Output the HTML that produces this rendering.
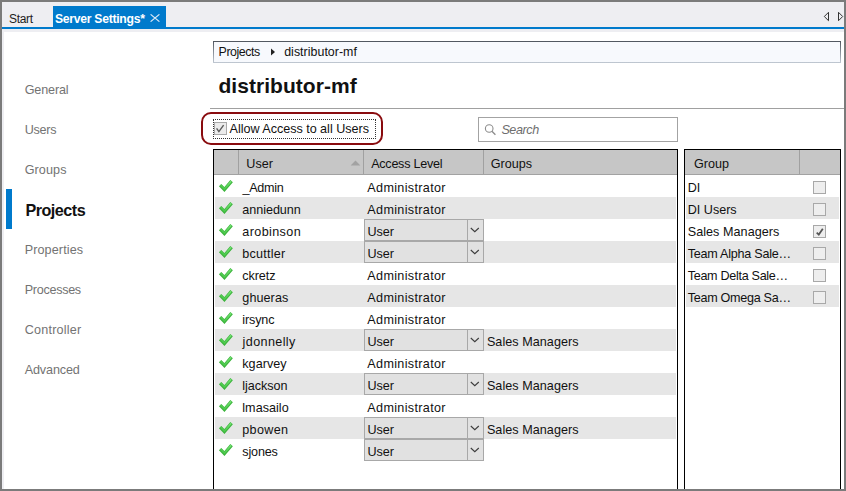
<!DOCTYPE html>
<html><head><meta charset="utf-8"><style>
html,body{margin:0;padding:0;width:846px;height:491px;overflow:hidden;background:#fff}
body{position:relative;font-family:"Liberation Sans",sans-serif}
body>div,body>svg{position:absolute}
.t{white-space:nowrap}
</style></head><body>
<div style="left:0px;top:0px;width:846px;height:491px;background:#7b7b7b;"></div>
<div style="left:2px;top:2px;width:842px;height:487px;background:#ffffff;"></div>
<div style="left:2px;top:2px;width:842px;height:25px;background:#eeeef2;"></div>
<div style="left:2px;top:27px;width:842px;height:2px;background:#007acc;"></div>
<div style="left:2px;top:29px;width:842px;height:3px;background:#eeeef2;"></div>
<div style="left:2px;top:29px;width:2px;height:460px;background:#eeeef2;"></div>
<div class="t" style="left:9.00px;top:12.64px;font-size:12px;line-height:12px;color:#1e1e1e;letter-spacing:-0.336px;">Start</div>
<div style="left:53px;top:6px;width:113px;height:21px;background:#007acc;"></div>
<div class="t" style="left:55.00px;top:13.07px;font-size:12.2px;line-height:12.2px;color:#ffffff;font-weight:bold;letter-spacing:-0.284px;">Server Settings*</div>
<svg style="left:150px;top:14px" width="10" height="8" viewBox="0 0 10 8"><path d="M0.6 0.4 L9.4 7.6 M9.4 0.4 L0.6 7.6" stroke="#dce9f6" stroke-width="1.2" fill="none"/></svg>
<svg style="left:822px;top:10px" width="22" height="13" viewBox="0 0 22 13"><path d="M6.5 2.3 L2.3 6.5 L6.5 10.7 Z" fill="none" stroke="#333" stroke-width="1"/><path d="M16.5 2.3 L20.7 6.5 L16.5 10.7 Z" fill="none" stroke="#333" stroke-width="1"/></svg>
<div class="t" style="left:24.70px;top:83.83px;font-size:12.6px;line-height:12.6px;color:#737373;letter-spacing:-0.138px;">General</div>
<div class="t" style="left:24.70px;top:123.63px;font-size:12.6px;line-height:12.6px;color:#737373;letter-spacing:-0.275px;">Users</div>
<div class="t" style="left:24.70px;top:163.63px;font-size:12.6px;line-height:12.6px;color:#737373;letter-spacing:0.097px;">Groups</div>
<div class="t" style="left:24.70px;top:243.63px;font-size:12.6px;line-height:12.6px;color:#737373;letter-spacing:0.108px;">Properties</div>
<div class="t" style="left:24.70px;top:283.53px;font-size:12.6px;line-height:12.6px;color:#737373;letter-spacing:-0.290px;">Processes</div>
<div class="t" style="left:24.70px;top:323.63px;font-size:12.6px;line-height:12.6px;color:#737373;letter-spacing:0.209px;">Controller</div>
<div class="t" style="left:24.70px;top:363.53px;font-size:12.6px;line-height:12.6px;color:#737373;letter-spacing:-0.121px;">Advanced</div>
<div class="t" style="left:25.40px;top:202.49px;font-size:16.2px;line-height:16.2px;color:#111111;font-weight:bold;letter-spacing:-0.518px;">Projects</div>
<div style="left:6px;top:189px;width:6px;height:40px;background:#007acc;"></div>
<div style="left:213px;top:41px;width:628px;height:22px;background:linear-gradient(#4f555e,#c0c8d2);"></div>
<div style="left:214px;top:42px;width:626px;height:20px;background:#f7f9fd;"></div>
<div class="t" style="left:218.60px;top:45.80px;font-size:12.4px;line-height:12.4px;color:#111111;letter-spacing:-0.456px;">Projects</div>
<svg style="left:270px;top:48px" width="6" height="8" viewBox="0 0 6 8"><path d="M1 0.5 L5 4 L1 7.5 Z" fill="#222"/></svg>
<div class="t" style="left:284.20px;top:45.80px;font-size:12.4px;line-height:12.4px;color:#111111;letter-spacing:0.032px;">distributor-mf</div>
<div class="t" style="left:218.40px;top:75.02px;font-size:21px;line-height:21px;color:#111111;font-weight:bold;letter-spacing:0.054px;">distributor-mf</div>
<div style="left:210px;top:108px;width:634px;height:1px;background:#a0a0a0;"></div>
<div style="left:201px;top:112px;width:182px;height:33px;border:2px solid #890b0e;box-sizing:border-box;border-radius:10px;"></div>
<div style="left:213px;top:119px;width:163px;height:20px;border:1px dotted #333;box-sizing:border-box;"></div>
<div style="left:214px;top:122px;width:13px;height:13px;background:#ebebeb;border:1px solid #a9a9a9;box-sizing:border-box;"></div>
<svg style="left:214px;top:122px" width="13" height="13" viewBox="0 0 13 13"><path d="M2.6 6.4 L4.9 9.6 L9.6 3.2" fill="none" stroke="#5a5a5a" stroke-width="1.4"/></svg>
<div class="t" style="left:229.50px;top:123.03px;font-size:12.6px;line-height:12.6px;color:#111111;letter-spacing:-0.023px;">Allow Access to all Users</div>
<div style="left:478px;top:117px;width:200px;height:25px;background:#ffffff;border:1px solid #a3a3a3;box-sizing:border-box;"></div>
<svg style="left:480px;top:120px" width="20" height="20" viewBox="0 0 20 20"><circle cx="9.2" cy="8.5" r="3.8" fill="none" stroke="#8c8c8c" stroke-width="1.1"/><path d="M11.9 11.3 L15.4 14.8" stroke="#8c8c8c" stroke-width="1.3"/></svg>
<div class="t" style="left:501.40px;top:124.03px;font-size:12.6px;line-height:12.6px;color:#6e6e6e;font-style:italic;letter-spacing:-0.423px;">Search</div>
<div style="left:213px;top:149px;width:465px;height:340px;background:#ffffff;border:1px solid #000;box-sizing:border-box;border-bottom:none;"></div>
<div style="left:214px;top:150px;width:463px;height:24px;background:#c6c6c6;"></div>
<div style="left:214px;top:174px;width:463px;height:1px;background:#a2a2a2;"></div>
<div style="left:238px;top:150px;width:1px;height:24px;background:#a0a0a0;"></div>
<div style="left:363px;top:150px;width:1px;height:24px;background:#a0a0a0;"></div>
<div style="left:483px;top:150px;width:1px;height:24px;background:#a0a0a0;"></div>
<div class="t" style="left:246.30px;top:158.13px;font-size:12.6px;line-height:12.6px;color:#111111;">User</div>
<svg style="left:350px;top:160px" width="11" height="6" viewBox="0 0 11 6"><path d="M0.6 5.6 L5.5 0.6 L10.4 5.6 Z" fill="#a2a2a2"/></svg>
<div class="t" style="left:371.20px;top:158.13px;font-size:12.6px;line-height:12.6px;color:#111111;letter-spacing:-0.267px;">Access Level</div>
<div class="t" style="left:490.80px;top:158.13px;font-size:12.6px;line-height:12.6px;color:#111111;">Groups</div>
<svg style="left:218px;top:178px" width="16" height="14" viewBox="0 0 16 14"><defs><linearGradient id="g0" x1="0" y1="1" x2="1" y2="0"><stop offset="0" stop-color="#45c445"/><stop offset="1" stop-color="#74e274"/></linearGradient></defs><path d="M2.1 7.1 L6.4 11.5 L13.6 3.1" fill="none" stroke="#3db43d" stroke-width="3.3"/><path d="M2.5 7.1 L6.4 11 L13.2 3.3" fill="none" stroke="url(#g0)" stroke-width="1.7"/></svg>
<div class="t" style="left:242.50px;top:181.53px;font-size:12.6px;line-height:12.6px;color:#111111;letter-spacing:-0.306px;">_Admin</div>
<div class="t" style="left:367.30px;top:181.53px;font-size:12.6px;line-height:12.6px;color:#111111;letter-spacing:0.339px;">Administrator</div>
<div style="left:215px;top:197px;width:461px;height:22px;background:#e6e6e6;"></div>
<svg style="left:218px;top:200px" width="16" height="14" viewBox="0 0 16 14"><defs><linearGradient id="g1" x1="0" y1="1" x2="1" y2="0"><stop offset="0" stop-color="#45c445"/><stop offset="1" stop-color="#74e274"/></linearGradient></defs><path d="M2.1 7.1 L6.4 11.5 L13.6 3.1" fill="none" stroke="#3db43d" stroke-width="3.3"/><path d="M2.5 7.1 L6.4 11 L13.2 3.3" fill="none" stroke="url(#g1)" stroke-width="1.7"/></svg>
<div class="t" style="left:242.30px;top:203.53px;font-size:12.6px;line-height:12.6px;color:#111111;letter-spacing:-0.044px;">anniedunn</div>
<div class="t" style="left:367.30px;top:203.53px;font-size:12.6px;line-height:12.6px;color:#111111;letter-spacing:0.339px;">Administrator</div>
<svg style="left:218px;top:222px" width="16" height="14" viewBox="0 0 16 14"><defs><linearGradient id="g2" x1="0" y1="1" x2="1" y2="0"><stop offset="0" stop-color="#45c445"/><stop offset="1" stop-color="#74e274"/></linearGradient></defs><path d="M2.1 7.1 L6.4 11.5 L13.6 3.1" fill="none" stroke="#3db43d" stroke-width="3.3"/><path d="M2.5 7.1 L6.4 11 L13.2 3.3" fill="none" stroke="url(#g2)" stroke-width="1.7"/></svg>
<div class="t" style="left:242.30px;top:225.53px;font-size:12.6px;line-height:12.6px;color:#111111;letter-spacing:0.383px;">arobinson</div>
<div style="left:364px;top:219px;width:120px;height:22px;background:#e1e1e1;border:1px solid #a8a8a8;box-sizing:border-box;"></div>
<div style="left:467px;top:219px;width:1px;height:22px;background:#a8a8a8;"></div>
<svg style="left:470px;top:227px" width="10" height="6" viewBox="0 0 10 6"><path d="M0.8 1 L4.8 4.7 L8.8 1" fill="none" stroke="#3c3c3c" stroke-width="1.1"/></svg>
<div class="t" style="left:367.40px;top:225.53px;font-size:12.6px;line-height:12.6px;color:#111111;letter-spacing:-0.033px;">User</div>
<div style="left:215px;top:241px;width:461px;height:22px;background:#e6e6e6;"></div>
<svg style="left:218px;top:244px" width="16" height="14" viewBox="0 0 16 14"><defs><linearGradient id="g3" x1="0" y1="1" x2="1" y2="0"><stop offset="0" stop-color="#45c445"/><stop offset="1" stop-color="#74e274"/></linearGradient></defs><path d="M2.1 7.1 L6.4 11.5 L13.6 3.1" fill="none" stroke="#3db43d" stroke-width="3.3"/><path d="M2.5 7.1 L6.4 11 L13.2 3.3" fill="none" stroke="url(#g3)" stroke-width="1.7"/></svg>
<div class="t" style="left:242.30px;top:247.53px;font-size:12.6px;line-height:12.6px;color:#111111;letter-spacing:0.241px;">bcuttler</div>
<div style="left:364px;top:241px;width:120px;height:22px;background:#e1e1e1;border:1px solid #a8a8a8;box-sizing:border-box;"></div>
<div style="left:467px;top:241px;width:1px;height:22px;background:#a8a8a8;"></div>
<svg style="left:470px;top:249px" width="10" height="6" viewBox="0 0 10 6"><path d="M0.8 1 L4.8 4.7 L8.8 1" fill="none" stroke="#3c3c3c" stroke-width="1.1"/></svg>
<div class="t" style="left:367.40px;top:247.53px;font-size:12.6px;line-height:12.6px;color:#111111;letter-spacing:-0.033px;">User</div>
<svg style="left:218px;top:266px" width="16" height="14" viewBox="0 0 16 14"><defs><linearGradient id="g4" x1="0" y1="1" x2="1" y2="0"><stop offset="0" stop-color="#45c445"/><stop offset="1" stop-color="#74e274"/></linearGradient></defs><path d="M2.1 7.1 L6.4 11.5 L13.6 3.1" fill="none" stroke="#3db43d" stroke-width="3.3"/><path d="M2.5 7.1 L6.4 11 L13.2 3.3" fill="none" stroke="url(#g4)" stroke-width="1.7"/></svg>
<div class="t" style="left:242.30px;top:269.53px;font-size:12.6px;line-height:12.6px;color:#111111;letter-spacing:-0.081px;">ckretz</div>
<div class="t" style="left:367.30px;top:269.53px;font-size:12.6px;line-height:12.6px;color:#111111;letter-spacing:0.339px;">Administrator</div>
<div style="left:215px;top:285px;width:461px;height:22px;background:#e6e6e6;"></div>
<svg style="left:218px;top:288px" width="16" height="14" viewBox="0 0 16 14"><defs><linearGradient id="g5" x1="0" y1="1" x2="1" y2="0"><stop offset="0" stop-color="#45c445"/><stop offset="1" stop-color="#74e274"/></linearGradient></defs><path d="M2.1 7.1 L6.4 11.5 L13.6 3.1" fill="none" stroke="#3db43d" stroke-width="3.3"/><path d="M2.5 7.1 L6.4 11 L13.2 3.3" fill="none" stroke="url(#g5)" stroke-width="1.7"/></svg>
<div class="t" style="left:242.30px;top:291.53px;font-size:12.6px;line-height:12.6px;color:#111111;letter-spacing:0.077px;">ghueras</div>
<div class="t" style="left:367.30px;top:291.53px;font-size:12.6px;line-height:12.6px;color:#111111;letter-spacing:0.339px;">Administrator</div>
<svg style="left:218px;top:310px" width="16" height="14" viewBox="0 0 16 14"><defs><linearGradient id="g6" x1="0" y1="1" x2="1" y2="0"><stop offset="0" stop-color="#45c445"/><stop offset="1" stop-color="#74e274"/></linearGradient></defs><path d="M2.1 7.1 L6.4 11.5 L13.6 3.1" fill="none" stroke="#3db43d" stroke-width="3.3"/><path d="M2.5 7.1 L6.4 11 L13.2 3.3" fill="none" stroke="url(#g6)" stroke-width="1.7"/></svg>
<div class="t" style="left:242.30px;top:313.53px;font-size:12.6px;line-height:12.6px;color:#111111;letter-spacing:-0.140px;">irsync</div>
<div class="t" style="left:367.30px;top:313.53px;font-size:12.6px;line-height:12.6px;color:#111111;letter-spacing:0.339px;">Administrator</div>
<div style="left:215px;top:329px;width:461px;height:22px;background:#e6e6e6;"></div>
<svg style="left:218px;top:332px" width="16" height="14" viewBox="0 0 16 14"><defs><linearGradient id="g7" x1="0" y1="1" x2="1" y2="0"><stop offset="0" stop-color="#45c445"/><stop offset="1" stop-color="#74e274"/></linearGradient></defs><path d="M2.1 7.1 L6.4 11.5 L13.6 3.1" fill="none" stroke="#3db43d" stroke-width="3.3"/><path d="M2.5 7.1 L6.4 11 L13.2 3.3" fill="none" stroke="url(#g7)" stroke-width="1.7"/></svg>
<div class="t" style="left:242.62px;top:335.53px;font-size:12.6px;line-height:12.6px;color:#111111;letter-spacing:0.369px;">jdonnelly</div>
<div style="left:364px;top:329px;width:120px;height:22px;background:#e1e1e1;border:1px solid #a8a8a8;box-sizing:border-box;"></div>
<div style="left:467px;top:329px;width:1px;height:22px;background:#a8a8a8;"></div>
<svg style="left:470px;top:337px" width="10" height="6" viewBox="0 0 10 6"><path d="M0.8 1 L4.8 4.7 L8.8 1" fill="none" stroke="#3c3c3c" stroke-width="1.1"/></svg>
<div class="t" style="left:367.40px;top:335.53px;font-size:12.6px;line-height:12.6px;color:#111111;letter-spacing:-0.033px;">User</div>
<div class="t" style="left:486.90px;top:335.53px;font-size:12.6px;line-height:12.6px;color:#111111;letter-spacing:0.050px;">Sales Managers</div>
<svg style="left:218px;top:354px" width="16" height="14" viewBox="0 0 16 14"><defs><linearGradient id="g8" x1="0" y1="1" x2="1" y2="0"><stop offset="0" stop-color="#45c445"/><stop offset="1" stop-color="#74e274"/></linearGradient></defs><path d="M2.1 7.1 L6.4 11.5 L13.6 3.1" fill="none" stroke="#3db43d" stroke-width="3.3"/><path d="M2.5 7.1 L6.4 11 L13.2 3.3" fill="none" stroke="url(#g8)" stroke-width="1.7"/></svg>
<div class="t" style="left:242.30px;top:357.53px;font-size:12.6px;line-height:12.6px;color:#111111;letter-spacing:0.031px;">kgarvey</div>
<div class="t" style="left:367.30px;top:357.53px;font-size:12.6px;line-height:12.6px;color:#111111;letter-spacing:0.339px;">Administrator</div>
<div style="left:215px;top:373px;width:461px;height:22px;background:#e6e6e6;"></div>
<svg style="left:218px;top:376px" width="16" height="14" viewBox="0 0 16 14"><defs><linearGradient id="g9" x1="0" y1="1" x2="1" y2="0"><stop offset="0" stop-color="#45c445"/><stop offset="1" stop-color="#74e274"/></linearGradient></defs><path d="M2.1 7.1 L6.4 11.5 L13.6 3.1" fill="none" stroke="#3db43d" stroke-width="3.3"/><path d="M2.5 7.1 L6.4 11 L13.2 3.3" fill="none" stroke="url(#g9)" stroke-width="1.7"/></svg>
<div class="t" style="left:242.30px;top:379.53px;font-size:12.6px;line-height:12.6px;color:#111111;letter-spacing:-0.032px;">ljackson</div>
<div style="left:364px;top:373px;width:120px;height:22px;background:#e1e1e1;border:1px solid #a8a8a8;box-sizing:border-box;"></div>
<div style="left:467px;top:373px;width:1px;height:22px;background:#a8a8a8;"></div>
<svg style="left:470px;top:381px" width="10" height="6" viewBox="0 0 10 6"><path d="M0.8 1 L4.8 4.7 L8.8 1" fill="none" stroke="#3c3c3c" stroke-width="1.1"/></svg>
<div class="t" style="left:367.40px;top:379.53px;font-size:12.6px;line-height:12.6px;color:#111111;letter-spacing:-0.033px;">User</div>
<div class="t" style="left:486.90px;top:379.53px;font-size:12.6px;line-height:12.6px;color:#111111;letter-spacing:0.050px;">Sales Managers</div>
<svg style="left:218px;top:398px" width="16" height="14" viewBox="0 0 16 14"><defs><linearGradient id="g10" x1="0" y1="1" x2="1" y2="0"><stop offset="0" stop-color="#45c445"/><stop offset="1" stop-color="#74e274"/></linearGradient></defs><path d="M2.1 7.1 L6.4 11.5 L13.6 3.1" fill="none" stroke="#3db43d" stroke-width="3.3"/><path d="M2.5 7.1 L6.4 11 L13.2 3.3" fill="none" stroke="url(#g10)" stroke-width="1.7"/></svg>
<div class="t" style="left:242.30px;top:401.53px;font-size:12.6px;line-height:12.6px;color:#111111;letter-spacing:0.026px;">lmasailo</div>
<div class="t" style="left:367.30px;top:401.53px;font-size:12.6px;line-height:12.6px;color:#111111;letter-spacing:0.339px;">Administrator</div>
<div style="left:215px;top:417px;width:461px;height:22px;background:#e6e6e6;"></div>
<svg style="left:218px;top:420px" width="16" height="14" viewBox="0 0 16 14"><defs><linearGradient id="g11" x1="0" y1="1" x2="1" y2="0"><stop offset="0" stop-color="#45c445"/><stop offset="1" stop-color="#74e274"/></linearGradient></defs><path d="M2.1 7.1 L6.4 11.5 L13.6 3.1" fill="none" stroke="#3db43d" stroke-width="3.3"/><path d="M2.5 7.1 L6.4 11 L13.2 3.3" fill="none" stroke="url(#g11)" stroke-width="1.7"/></svg>
<div class="t" style="left:242.30px;top:423.53px;font-size:12.6px;line-height:12.6px;color:#111111;letter-spacing:0.312px;">pbowen</div>
<div style="left:364px;top:417px;width:120px;height:22px;background:#e1e1e1;border:1px solid #a8a8a8;box-sizing:border-box;"></div>
<div style="left:467px;top:417px;width:1px;height:22px;background:#a8a8a8;"></div>
<svg style="left:470px;top:425px" width="10" height="6" viewBox="0 0 10 6"><path d="M0.8 1 L4.8 4.7 L8.8 1" fill="none" stroke="#3c3c3c" stroke-width="1.1"/></svg>
<div class="t" style="left:367.40px;top:423.53px;font-size:12.6px;line-height:12.6px;color:#111111;letter-spacing:-0.033px;">User</div>
<div class="t" style="left:486.90px;top:423.53px;font-size:12.6px;line-height:12.6px;color:#111111;letter-spacing:0.050px;">Sales Managers</div>
<svg style="left:218px;top:442px" width="16" height="14" viewBox="0 0 16 14"><defs><linearGradient id="g12" x1="0" y1="1" x2="1" y2="0"><stop offset="0" stop-color="#45c445"/><stop offset="1" stop-color="#74e274"/></linearGradient></defs><path d="M2.1 7.1 L6.4 11.5 L13.6 3.1" fill="none" stroke="#3db43d" stroke-width="3.3"/><path d="M2.5 7.1 L6.4 11 L13.2 3.3" fill="none" stroke="url(#g12)" stroke-width="1.7"/></svg>
<div class="t" style="left:242.30px;top:445.53px;font-size:12.6px;line-height:12.6px;color:#111111;letter-spacing:-0.165px;">sjones</div>
<div style="left:364px;top:439px;width:120px;height:22px;background:#e1e1e1;border:1px solid #a8a8a8;box-sizing:border-box;"></div>
<div style="left:467px;top:439px;width:1px;height:22px;background:#a8a8a8;"></div>
<svg style="left:470px;top:447px" width="10" height="6" viewBox="0 0 10 6"><path d="M0.8 1 L4.8 4.7 L8.8 1" fill="none" stroke="#3c3c3c" stroke-width="1.1"/></svg>
<div class="t" style="left:367.40px;top:445.53px;font-size:12.6px;line-height:12.6px;color:#111111;letter-spacing:-0.033px;">User</div>
<div style="left:684px;top:149px;width:157px;height:340px;background:#ffffff;border:1px solid #000;box-sizing:border-box;border-bottom:none;"></div>
<div style="left:685px;top:150px;width:155px;height:24px;background:#c6c6c6;"></div>
<div style="left:685px;top:174px;width:155px;height:1px;background:#a2a2a2;"></div>
<div style="left:799px;top:150px;width:1px;height:24px;background:#a0a0a0;"></div>
<div class="t" style="left:694.00px;top:158.13px;font-size:12.6px;line-height:12.6px;color:#111111;">Group</div>
<div class="t" style="left:687.70px;top:181.53px;font-size:12.6px;line-height:12.6px;color:#111111;">DI</div>
<div style="left:813px;top:181px;width:13px;height:13px;background:#eeeeee;border:1px solid #a8a8a8;box-sizing:border-box;"></div>
<div style="left:686px;top:197px;width:153px;height:22px;background:#e6e6e6;"></div>
<div class="t" style="left:687.70px;top:203.53px;font-size:12.6px;line-height:12.6px;color:#111111;">DI Users</div>
<div style="left:813px;top:203px;width:13px;height:13px;background:#eeeeee;border:1px solid #a8a8a8;box-sizing:border-box;"></div>
<div class="t" style="left:687.70px;top:225.53px;font-size:12.6px;line-height:12.6px;color:#111111;letter-spacing:0.050px;">Sales Managers</div>
<div style="left:813px;top:225px;width:13px;height:13px;background:#eeeeee;border:1px solid #a8a8a8;box-sizing:border-box;"></div>
<svg style="left:815px;top:227px" width="10" height="10" viewBox="0 0 10 10"><path d="M1.7 5.6 L3.8 7.6 L7.8 1.8" fill="none" stroke="#555555" stroke-width="1.75"/></svg>
<div style="left:686px;top:241px;width:153px;height:22px;background:#e6e6e6;"></div>
<div class="t" style="left:687.70px;top:247.53px;font-size:12.6px;line-height:12.6px;color:#111111;letter-spacing:-0.251px;">Team Alpha Sale…</div>
<div style="left:813px;top:247px;width:13px;height:13px;background:#eeeeee;border:1px solid #a8a8a8;box-sizing:border-box;"></div>
<div class="t" style="left:687.70px;top:269.53px;font-size:12.6px;line-height:12.6px;color:#111111;letter-spacing:-0.303px;">Team Delta Sale…</div>
<div style="left:813px;top:269px;width:13px;height:13px;background:#eeeeee;border:1px solid #a8a8a8;box-sizing:border-box;"></div>
<div style="left:686px;top:285px;width:153px;height:22px;background:#e6e6e6;"></div>
<div class="t" style="left:687.70px;top:291.53px;font-size:12.6px;line-height:12.6px;color:#111111;letter-spacing:-0.288px;">Team Omega Sa…</div>
<div style="left:813px;top:291px;width:13px;height:13px;background:#eeeeee;border:1px solid #a8a8a8;box-sizing:border-box;"></div>
</body></html>
